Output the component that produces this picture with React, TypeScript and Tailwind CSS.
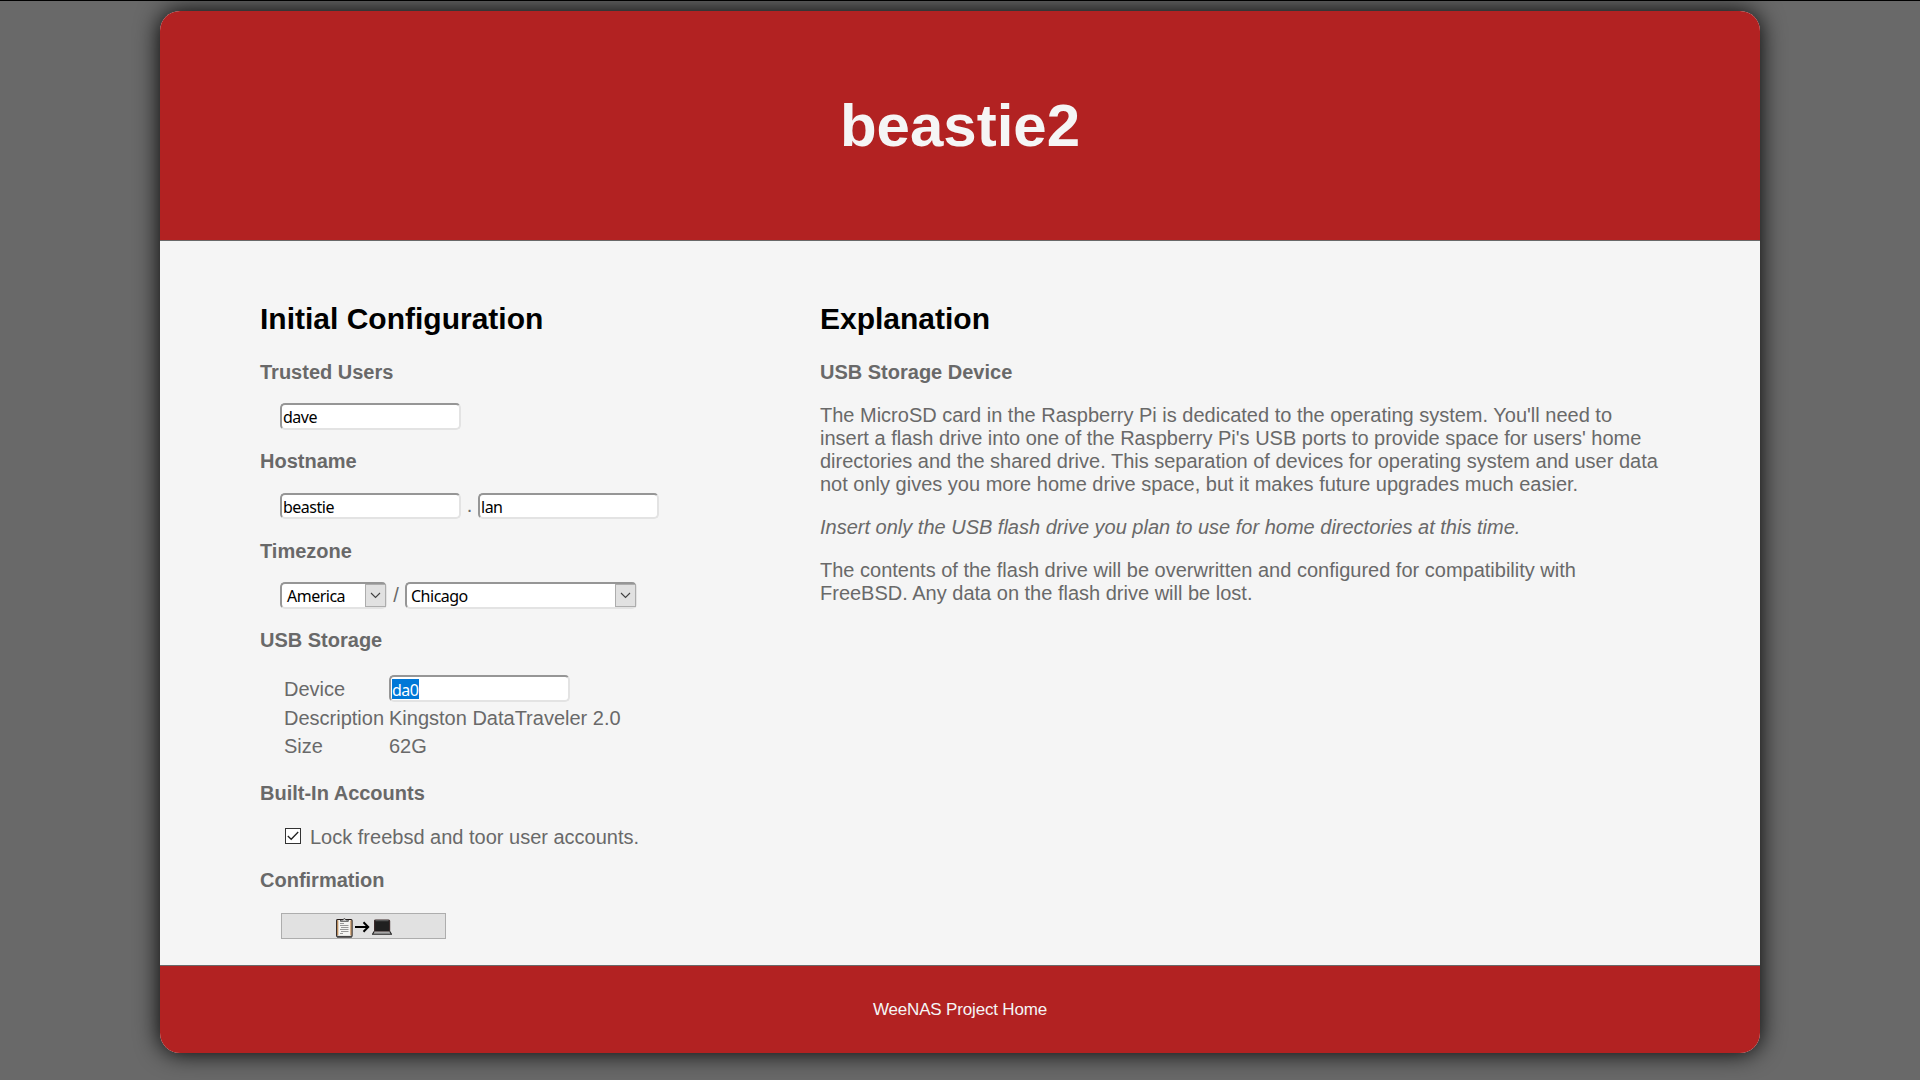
import React from "react";

const fieldFont = "font-['Noto_Sans',sans-serif] text-[16px] leading-[22px] tracking-[-0.5px] text-black";
const fieldBox =
  "rounded-[5px] border-2 border-t-[#969696] border-l-[#969696] border-r-[#e3e3e3] border-b-[#e3e3e3] bg-white";

function Field({ value, selected = false, height = "h-[27px]" }: { value: string; selected?: boolean; height?: string }) {
  return (
    <div className={`${fieldBox} ${fieldFont} ${height} w-[181px] shrink-0 pl-px whitespace-nowrap`}>
      {selected ? (
        <span className="mt-[2px] block h-[20px] w-[27px] bg-[#0078d7] leading-[22px] text-white">{value}</span>
      ) : (
        <span className="block pt-px">{value}</span>
      )}
    </div>
  );
}

function Select({ value, width, inset = "" }: { value: string; width: string; inset?: string }) {
  return (
    <div className={`${fieldBox} ${fieldFont} ${width} flex h-[27px] shrink-0 justify-between pl-[5px]`}>
      <span className={`pt-px ${inset}`}>{value}</span>
      <span className="-mr-px flex h-[23px] w-[21px] items-center justify-center border border-[#adadad] bg-[#e1e1e1]">
        <svg width="11" height="7" viewBox="0 0 11 7" fill="none" stroke="#404040" strokeWidth="1.1">
          <path d="M1 1l4.5 4.5L10 1" />
        </svg>
      </span>
    </div>
  );
}

function Heading({ children }: { children: React.ReactNode }) {
  return <h3 className="h-[23px] text-[20px] leading-[23px] font-bold">{children}</h3>;
}

function Clipboard() {
  return (
    <svg width="17" height="21" viewBox="0 0 17 21">
      <rect x="0.7" y="2.5" width="15.3" height="17.3" rx="1" fill="#f4f4f2" stroke="#221a18" strokeWidth="1.2" />
      <path d="M1.8 3.4v15M14.9 3.4v15" stroke="#b8752f" strokeWidth="0.9" />
      <path d="M4.5 4.4V3h2.3L8.4 1.2 10 3h2.3v1.4z" fill="#c9c9c9" stroke="#333" strokeWidth=".7" />
      <path d="M4 6.5h4M4 8.5h8.5M5 10.5h7.5M4 12.5h8.5M5 14.5h7.5M4 16.5h3" stroke="#808080" strokeWidth=".8" />
      <path d="M1 19.7h15" stroke="#444" strokeWidth="1.6" />
    </svg>
  );
}

function Laptop() {
  return (
    <svg width="20" height="17" viewBox="0 0 20 17">
      <rect x="2.6" y="1" width="15" height="11.5" rx="1" fill="#202020" stroke="#3c2b2b" strokeWidth="1.2" />
      <path d="M3.5 1.6h13" stroke="#555" strokeWidth="1.3" />
      <path d="M2.3 12.5h15.4l1.8 2.5H.5z" fill="#a8a8a8" />
      <path d="M2.3 12.3L.5 15.2h19l-1.8-2.9" fill="none" stroke="#222" strokeWidth="1.1" />
    </svg>
  );
}

export default function App() {
  return (
    <div className="h-[1080px] w-full overflow-hidden border-t border-black bg-[#696969] pt-[10px] font-['Liberation_Sans',Arial,sans-serif] text-[20px] leading-[23px] text-[#696969]">
      <div className="mx-auto flex h-[1042px] w-[1600px] flex-col overflow-hidden rounded-[20px] bg-[#f5f5f5] shadow-[0_0_25px_#000]">
        <header className="flex h-[230px] shrink-0 justify-center border-b border-[#696969] bg-[#b22222] pt-[81px]">
          <h1 className="text-[60px] leading-[68px] font-bold text-[#f5f5f5]">beastie2</h1>
        </header>

        <main className="flex min-h-0 flex-1 pt-[61px] pl-[100px]">
          <section className="w-[560px] shrink-0">
            <h2 className="mb-[25px] text-[30px] leading-[34px] font-bold text-black">Initial Configuration</h2>

            <Heading>Trusted Users</Heading>
            <div className="mt-[19px] mb-5 ml-5 flex">
              <Field value="dave" />
            </div>

            <Heading>Hostname</Heading>
            <div className="mt-5 mb-[21px] ml-5 flex">
              <Field value="beastie" height="h-[26px]" />
              <span className="h-[26px] w-[17px] pt-px text-center">.</span>
              <Field value="lan" height="h-[26px]" />
            </div>

            <Heading>Timezone</Heading>
            <div className="mt-[19px] mb-5 ml-5 flex">
              <Select value="America" width="w-[107px]" />
              <span className="w-[18px] pt-[2px] text-center">/</span>
              <Select value="Chicago" width="w-[232px]" inset="-ml-px" />
            </div>

            <Heading>USB Storage</Heading>
            <div className="mt-[23px] ml-6 grid grid-cols-[105px_1fr] grid-rows-[32px_28px_24px]">
              <span className="pt-[3px]">Device</span>
              <Field value="da0" selected />
              <span>Description</span>
              <span>Kingston DataTraveler 2.0</span>
              <span>Size</span>
              <span>62G</span>
            </div>

            <div className="mt-[23px]">
              <Heading>Built-In Accounts</Heading>
            </div>
            <div className="mt-[21px] mb-5 ml-[25px] flex">
              <span className="mt-[2px] mr-[9px] flex size-4 items-center justify-center border border-[#333] bg-white">
                <svg width="12" height="10" viewBox="0 0 12 10" fill="none" stroke="#222" strokeWidth="1.3">
                  <path d="M.8 5l3.4 3.3L11.2 1" />
                </svg>
              </span>
              <span>Lock freebsd and toor user accounts.</span>
            </div>

            <Heading>Confirmation</Heading>
            <button className="mt-[21px] ml-[21px] flex h-[26px] w-[165px] items-center justify-center border border-[#adadad] bg-[#e1e1e1] pt-[2px]">
              <Clipboard />
              <svg className="mx-[2px]" width="15" height="12" viewBox="0 0 15 12" fill="none" stroke="#000" strokeWidth="2">
                <path d="M0 6h13M8.5 1.3L13.2 6l-4.7 4.7" />
              </svg>
              <Laptop />
            </button>
          </section>

          <section className="w-[860px] shrink-0">
            <h2 className="mb-[25px] text-[30px] leading-[34px] font-bold text-black">Explanation</h2>
            <Heading>USB Storage Device</Heading>
            <p className="mt-5 whitespace-nowrap">
              The MicroSD card in the Raspberry Pi is dedicated to the operating system. You'll need to
              <br />
              insert a flash drive into one of the Raspberry Pi's USB ports to provide space for users' home
              <br />
              directories and the shared drive. This separation of devices for operating system and user data
              <br />
              not only gives you more home drive space, but it makes future upgrades much easier.
            </p>
            <p className="mt-5 whitespace-nowrap italic">
              Insert only the USB flash drive you plan to use for home directories at this time.
            </p>
            <p className="mt-5 whitespace-nowrap">
              The contents of the flash drive will be overwritten and configured for compatibility with
              <br />
              FreeBSD. Any data on the flash drive will be lost.
            </p>
          </section>
        </main>

        <footer className="h-[88px] shrink-0 border-t border-[#696969] bg-[#b22222] pt-[34px] text-center text-[17px] leading-[19px] tracking-[-0.17px] text-[#f5f5f5]">
          WeeNAS Project Home
        </footer>
      </div>
    </div>
  );
}
